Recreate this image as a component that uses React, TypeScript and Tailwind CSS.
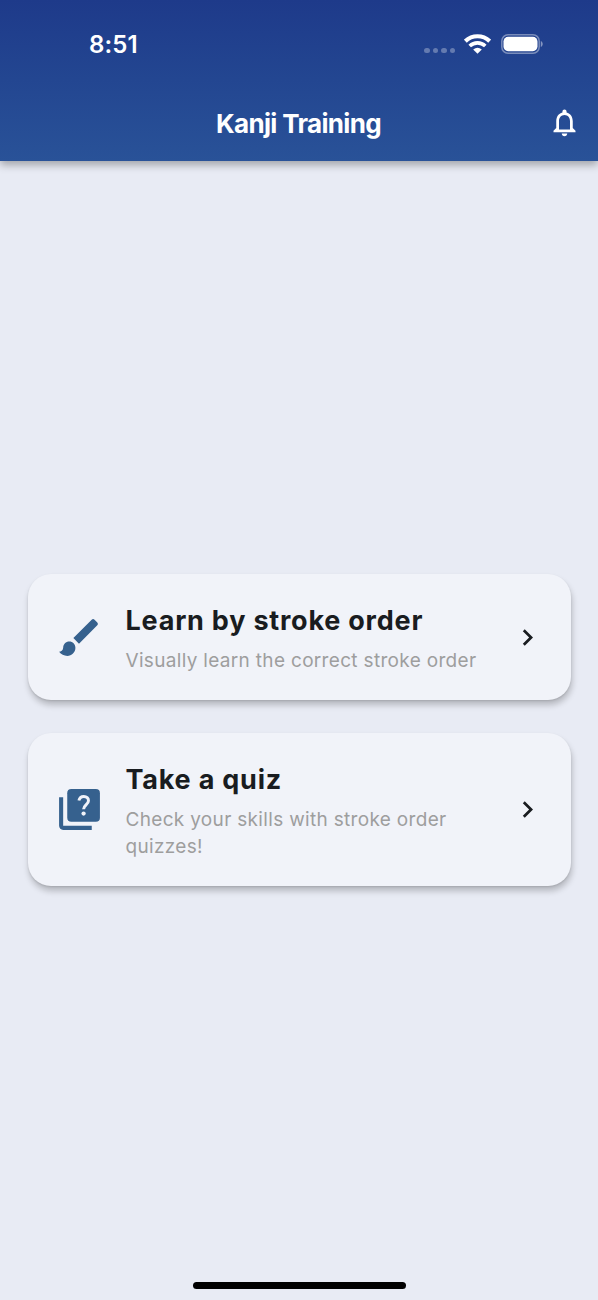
import React from 'react';
import { MdBrush, MdChevronRight, MdNotificationsNone } from 'react-icons/md';

interface IconProps {
  className?: string;
}

interface TrainingCardProps {
  icon: React.ComponentType<IconProps>;
  title: string;
  description: string;
}

const QuizIcon = ({ className }: IconProps) => (
  <svg className={className} viewBox="0 0 24 24" fill="none">
    <path d="M4 6H2v14c0 1.100.9 2 2 2h14v-2H4V6z" fill="currentColor" />
    <rect x="6" y="2" width="16" height="16" rx="2" fill="currentColor" />
    <path d="M11.700 7.600C12 6.300 12.900 5.600 14.100 5.600C15.500 5.600 16.400 6.500 16.400 7.700C16.400 9.500 14 9.700 14 11.900" stroke="#f1f3f9" strokeWidth="1.450" />
    <circle cx="14" cy="14" r="1.050" fill="#f1f3f9" />
  </svg>
);

const StatusBar = () => (
  <div className="flex h-[88px] items-center justify-between pl-[89px] pr-[55px]">
    <span className="mt-[2px] text-[24px] font-semibold leading-none tracking-[0.1px]">8:51</span>
    <div className="flex items-center">
      <div className="mr-[9px] mt-[13px] flex gap-[3px]">
        <span className="size-[5.5px] rounded-full bg-white/30" />
        <span className="size-[5.5px] rounded-full bg-white/30" />
        <span className="size-[5.5px] rounded-full bg-white/30" />
        <span className="size-[5.5px] rounded-full bg-white/30" />
      </div>
      <svg className="mr-[10px] h-[20px] w-[27px]" viewBox="0 0 27 20" fill="none">
        <path d="M1.300 7.200C8.200.6 18.800.6 25.700 7.200" stroke="white" strokeWidth="4.200" />
        <path d="M5.700 12C10.200 7.800 16.800 7.800 21.300 12" stroke="white" strokeWidth="3.700" />
        <path d="M9.200 15.400Q13.500 11.900 17.800 15.400L13.500 19.700Z" fill="white" />
      </svg>
      <svg className="h-[20px] w-[42px]" viewBox="0 0 42 20" fill="none">
        <rect x=".8" y=".8" width="37.400" height="18.400" rx="6.200" stroke="white" strokeOpacity=".4" strokeWidth="1.500" />
        <rect x="2.500" y="2.800" width="34" height="14.400" rx="4.600" fill="white" />
        <path d="M39.800 7v6c2.500-1 2.500-5 0-6z" fill="white" fillOpacity=".45" />
      </svg>
    </div>
  </div>
);

const TrainingCard = ({ icon: Icon, title, description }: TrainingCardProps) => (
  <button className="flex w-full items-center rounded-[23px] bg-[#f1f3f9] px-[27px] pb-[26px] pt-[28px] text-left shadow-[1px_5px_6px_rgba(0,0,0,0.22),0_1px_2px_rgba(0,0,0,0.1)]">
    <Icon className="-mt-[2px] size-[49px] shrink-0 text-[#36618e]" />
    <div className="ml-[22px] min-w-0 flex-1 pr-[20px]">
      <h2 className="text-[27px] font-bold leading-[38px] tracking-[0.78px] text-[#191c20]">{title}</h2>
      <p className="mt-[7px] text-[19px] leading-[27px] tracking-[0.32px] text-[#9e9e9e]">{description}</p>
    </div>
    <MdChevronRight className="-mt-[2px] size-[33px] shrink-0 text-[#191c20]" />
  </button>
);

export default function App() {
  return (
    <div className="flex h-[1300px] w-[598px] flex-col bg-[#e8ebf4] font-['Inter',sans-serif]">
      <header className="h-[161px] bg-linear-to-b from-[#1e3a8a] to-[#295298] text-white shadow-[0_4px_8px_rgba(0,0,0,0.3)]">
        <StatusBar />
        <div className="grid h-[72px] grid-cols-[1fr_auto_1fr] items-center pr-[17px]">
          <h1 className="col-start-2 ml-[16px] text-[26px] font-bold leading-none tracking-[-0.66px]">Kanji Training</h1>
          <button className="mb-[3px] justify-self-end" aria-label="Notifications">
            <MdNotificationsNone className="size-[33px]" />
          </button>
        </div>
      </header>

      <main className="flex flex-1 flex-col justify-center gap-[33px] px-[27.500px] pt-[17px]">
        <TrainingCard
          icon={MdBrush}
          title="Learn by stroke order"
          description="Visually learn the correct stroke order"
        />
        <TrainingCard
          icon={QuizIcon}
          title="Take a quiz"
          description="Check your skills with stroke order quizzes!"
        />
      </main>

      <div className="mb-[11px] h-[7px] w-[213px] self-center rounded-full bg-black" />
    </div>
  );
}
